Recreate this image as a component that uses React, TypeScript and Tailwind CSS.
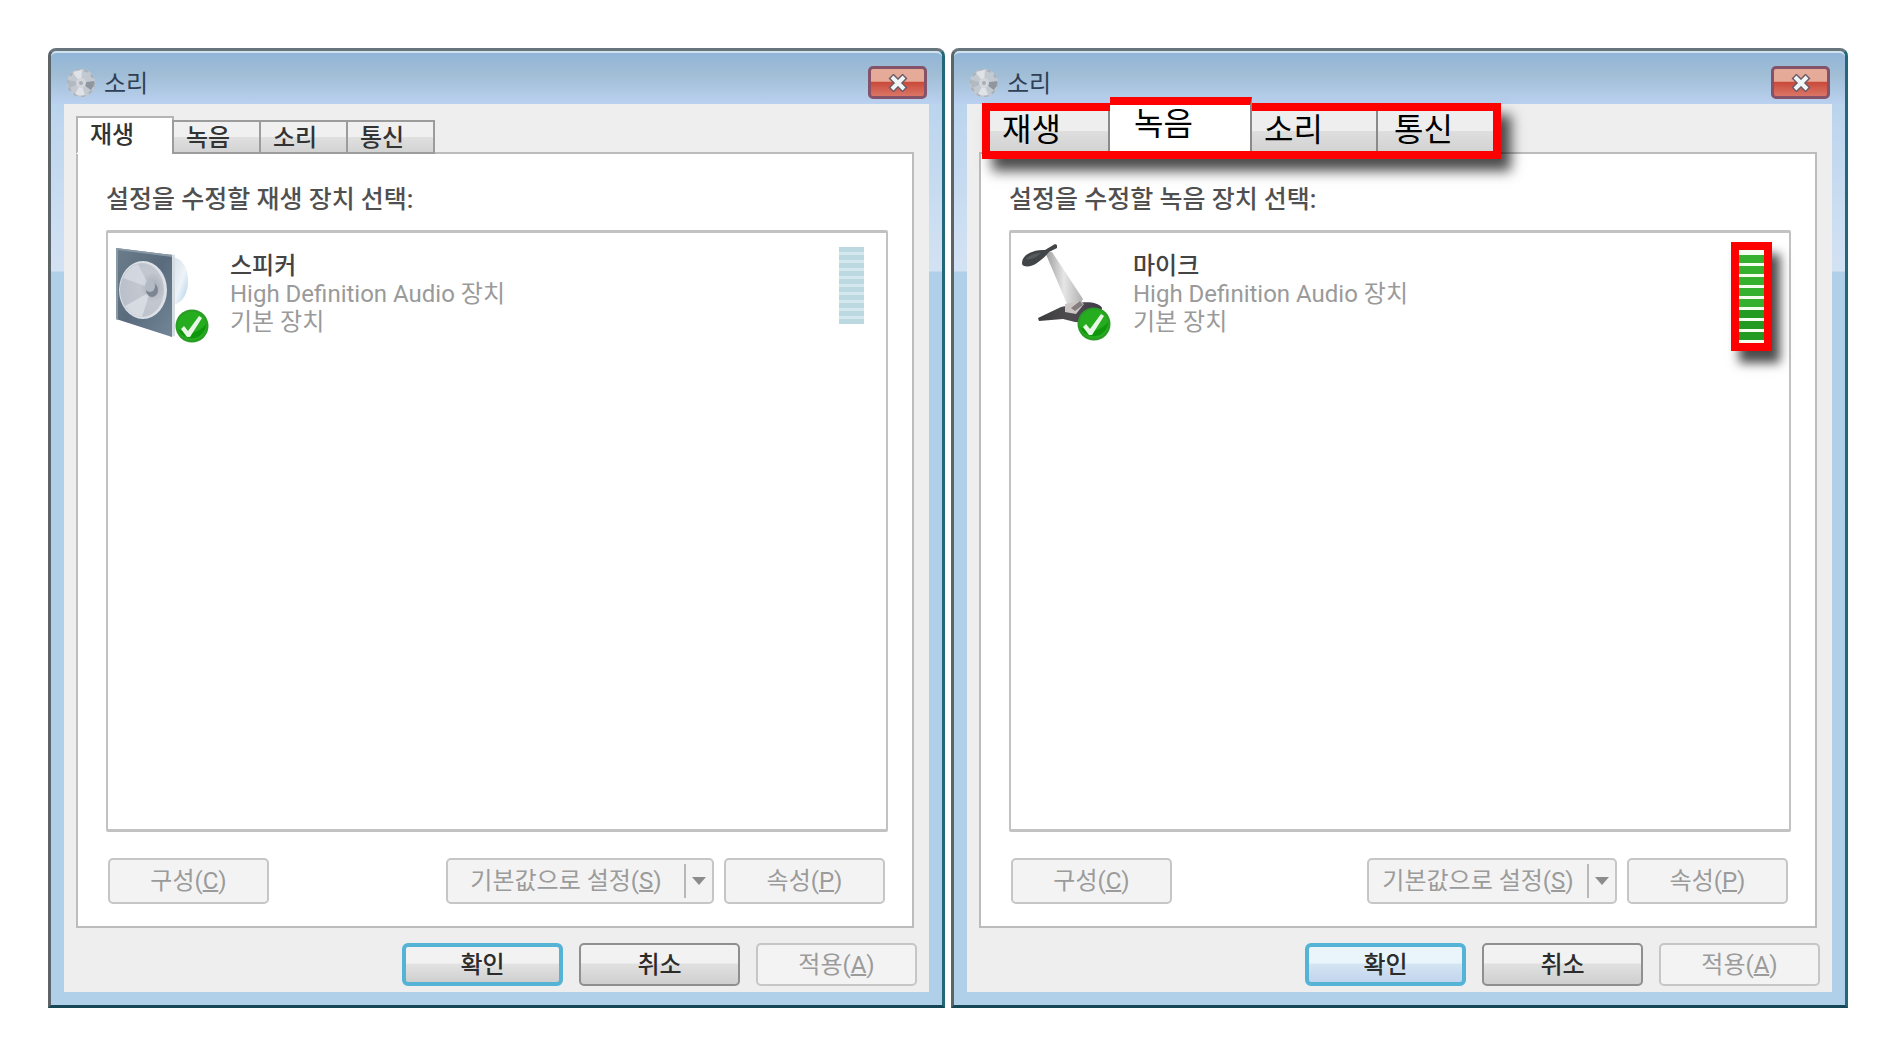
import { useState } from 'react';
import clsx from 'clsx';

type Kind = 'playback' | 'recording';

const TABS = ['재생', '녹음', '소리', '통신'];

function DefaultBadge({ cx, cy }: { cx: number; cy: number }) {
  return (
    <g transform={`translate(${cx} ${cy})`}>
      <circle r="16.5" fill="#2a9c25" />
      <circle r="14.5" fill="#25ac1f" />
      <path d="M-14 3a14.5 14.5 0 0 0 28-5C6 8-4 9-14 3z" fill="#0f970c" />
      <path d="M-11 3l3-3 4 5L7-10l3 2L-2 11h-3z" fill="#e9f8e6" />
    </g>
  );
}

function SpeakerIcon() {
  return (
    <svg className="size-[104px] shrink-0" viewBox="0 0 104 104" aria-hidden="true">
      <defs>
        <linearGradient id="spk-face" x1="0" y1="0" x2="1" y2="1">
          <stop offset="0" stopColor="#6c7d8b" />
          <stop offset="0.5" stopColor="#596b7c" />
          <stop offset="1" stopColor="#738799" />
        </linearGradient>
        <radialGradient id="spk-cone" cx="0.75" cy="0.45" r="0.8">
          <stop offset="0" stopColor="#a4a9b3" />
          <stop offset="0.35" stopColor="#c3c7d0" />
          <stop offset="1" stopColor="#b9bfc9" />
        </radialGradient>
        <linearGradient id="spk-side" x1="0" y1="0" x2="1" y2="1">
          <stop offset="0" stopColor="#d5e0e7" />
          <stop offset="0.55" stopColor="#edf3f8" />
          <stop offset="1" stopColor="#a9cfea" />
        </linearGradient>
      </defs>
      <path d="M60 15c10 1 16 10 16 24 0 12-5 22-15 24z" fill="url(#spk-side)" />
      <path d="M58 12l5 1v81l-5 1z" fill="#d5dde3" />
      <path d="M4 6l56 7v82L4 77z" fill="url(#spk-face)" />
      <path d="M4 6l56 7v2L6 8v70l-2-1z" fill="#8999a6" />
      <ellipse cx="31" cy="48" rx="24" ry="29" fill="#dce1e8" />
      <ellipse cx="30" cy="48" rx="22" ry="27" fill="url(#spk-cone)" />
      <path d="M38 46L11 36a22 27 0 0 1 15-14z" fill="#e0e3e9" opacity="0.6" />
      <path d="M38 50L13 64a22 27 0 0 0 17 11z" fill="#e6e9ee" opacity="0.6" />
      <ellipse cx="40" cy="48" rx="6" ry="7" fill="#7c8591" />
      <ellipse cx="38" cy="44" rx="5" ry="6" fill="#b4bac4" />
      <DefaultBadge cx={80} cy={84} />
    </svg>
  );
}

function MicrophoneIcon() {
  return (
    <svg className="size-[104px] shrink-0" viewBox="0 0 104 104" aria-hidden="true">
      <defs>
        <linearGradient id="mic-arm" x1="0" y1="0" x2="1" y2="0">
          <stop offset="0" stopColor="#9a9a9a" />
          <stop offset="0.5" stopColor="#e6e6e6" />
          <stop offset="1" stopColor="#b0b0b0" />
        </linearGradient>
        <linearGradient id="mic-base" x1="0" y1="0" x2="1" y2="0">
          <stop offset="0" stopColor="#3b3b3d" />
          <stop offset="0.5" stopColor="#4e4c50" />
          <stop offset="1" stopColor="#42384a" />
        </linearGradient>
      </defs>
      <path d="M23 76l23-11 14-3c10-3 24-2 27 4l-3 16-24-2-12-3-24 2z" fill="url(#mic-base)" />
      <path d="M30 10h7l31 47-4 8-12-3z" fill="url(#mic-arm)" />
      <path d="M50 62l14-3 5 3-8 10-11-2z" fill="#cbc5c3" />
      <path d="M56 66l9-7 3 4-8 6z" fill="#857d7f" />
      <path d="M7 21c0-5 4-9 10-11 5-2 9-2 13-2l10-6 2 1v3l-8 4c-4 5-8 8-12 11-4 3-9 4-13 3-2-1-2-2-2-3z" fill="#424547" />
      <path d="M11 17c4-4 9-6 15-6-4 4-9 7-15 6z" fill="#595c5e" />
      <DefaultBadge cx={79} cy={82} />
    </svg>
  );
}

function TitleIcon() {
  return (
    <svg className="size-[30px]" viewBox="0 0 30 30" aria-hidden="true">
      <circle cx="15" cy="15" r="14" fill="#c3c9d0" />
      <circle cx="15" cy="15" r="13" fill="none" stroke="#a9afb7" strokeWidth="2" strokeDasharray="4 4" />
      <path d="M15 15L7 5a13 13 0 0 1 9-3zM15 15l4 12a13 13 0 0 1-10-1z" fill="#dfe2e6" />
      <path d="M15 15l13-2a13 13 0 0 1-3 9z" fill="#8f96a0" />
      <path d="M15 15L2 12a13 13 0 0 0 1 8z" fill="#b3b9c1" />
      <circle cx="15" cy="15" r="5" fill="#d3d6da" />
      <circle cx="15" cy="15" r="2" fill="#a8aeb6" />
    </svg>
  );
}

function IdleMeter() {
  return (
    <div className="mt-[5px] mr-[22px] flex w-[25px] flex-col gap-[3px] self-start bg-[#d5e8ee]">
      {Array.from({ length: 10 }, (_, i) => (
        <div key={i} className="h-[5px] bg-[#bcd8e1]" />
      ))}
    </div>
  );
}

function ActiveMeter() {
  return (
    <div className="mr-[17px] flex w-[41px] flex-col gap-[3px] self-start border-8 border-[#fe0000] bg-[#f4fff0] pt-[5px] pb-[3px] shadow-[8px_12px_10px_0px_rgba(0,0,0,0.7)]">
      {Array.from({ length: 8 }, (_, i) => (
        <div key={i} className={clsx('h-2', i < 5 ? 'bg-[#35b02f]' : 'bg-[#239a22]')} />
      ))}
    </div>
  );
}

interface TabsProps {
  active: number;
  onChange: (index: number) => void;
}

function TabStrip({ active, onChange }: TabsProps) {
  return (
    <div role="tablist" className="relative z-10 -mb-[2px] flex h-[38px] items-end">
      {TABS.map((tab, i) => (
        <button
          key={tab}
          role="tab"
          aria-selected={i === active}
          onClick={() => onChange(i)}
          className={clsx(
            'border-2 text-left text-2xl leading-7 font-medium',
            i === active
              ? 'h-[38px] w-[98px] border-[#b4b4b4] border-b-white bg-white pl-3'
              : '-ml-[2px] h-[34px] w-[89px] border-[#9c9c9c] bg-linear-to-b from-[#f0f0f0] from-50% via-[#e0e0e0] via-50% to-[#d3d3d3] pt-[2px] pl-3',
          )}
        >
          {tab}
        </button>
      ))}
    </div>
  );
}

// Enlarged tab strip with the red marker, laid over the regular one
function MarkedTabStrip({ active, onChange }: TabsProps) {
  return (
    <div className="relative z-10 -mb-[2px] h-[38px]">
      <div
        role="tablist"
        className="absolute -top-[13px] left-[3px] grid h-[56px] w-[519px] grid-cols-[120px_142px_126px_1fr] border-8 border-[#fe0000] bg-[#e4e4e4] shadow-[10px_12px_12px_0px_rgba(0,0,0,0.7)]"
      >
        {TABS.map((tab, i) => (
          <button
            key={tab}
            role="tab"
            aria-selected={i === active}
            onClick={() => onChange(i)}
            className={clsx(
              'text-left text-[32px] leading-8 text-black',
              i === active
                ? '-mt-[14px] border-t-8 border-r-2 border-t-[#fe0000] border-r-[#8a8a8a] bg-white pb-2 pl-6'
                : 'border-r-2 border-[#8a8a8a] bg-linear-to-b from-[#eeeeee] from-50% via-[#dedede] via-50% to-[#d3d3d3] pb-[2px] pl-3 last:border-r-0 last:pl-4',
            )}
          >
            {tab}
          </button>
        ))}
      </div>
    </div>
  );
}

const disabledButton = 'rounded-[5px] border-2 border-[#c6c6c6] bg-[#f3f3f3] text-[#9b9b9b]';

interface SoundDialogProps {
  kind: Kind;
  prompt: string;
  device: string;
}

function SoundDialog({ kind, prompt, device }: SoundDialogProps) {
  const recording = kind === 'recording';
  const [active, setActive] = useState(recording ? 1 : 0);
  const Strip = recording ? MarkedTabStrip : TabStrip;

  return (
    <section className="flex flex-col rounded-t-lg border-3 border-t-[#68757d] border-r-[#236878] border-b-[#164756] border-l-[#5c6468] bg-linear-to-b from-[#b3d0ec] via-[#d3e2f3] via-[220px] to-[#b0d0ea] to-[221px] px-[13px] pb-[13px]">
      <header className="-mx-[13px] flex h-[53px] items-center gap-2 rounded-t-md border-t-2 border-[#cfe3ec] bg-linear-to-b from-[#91b5d8] via-[#a0bdd5] via-40% to-[#bad1ef] px-[15px] pt-2">
        <TitleIcon />
        <h1 className="flex-1 pt-[2px] text-2xl leading-8 text-[#2f3f55]">소리</h1>
        <button
          aria-label="닫기"
          className="flex h-[33px] w-[59px] items-center justify-center rounded-[5px] border-3 border-[#84536a] bg-linear-to-b from-[#e6ab98] from-45% via-[#c94a3b] via-50% to-[#db7566]"
        >
          <svg className="h-[18px] w-[22px]" viewBox="0 0 22 18" aria-hidden="true">
            <path d="M4 2l14 14M18 2L4 16" stroke="#6d5a68" strokeWidth="7" />
            <path d="M5 3l12 12M17 3L5 15" stroke="#f2f5f5" strokeWidth="4" />
          </svg>
        </button>
      </header>

      <div className="flex flex-1 flex-col bg-[#eeeeee] pt-3 pr-3 pb-[6px] pl-3">
        <div className="mr-[3px] flex flex-1 flex-col">
          <Strip active={active} onChange={setActive} />
          <div className="flex flex-1 flex-col border-2 border-[#bcbcbc] bg-white pt-[30px] pr-6 pb-[22px] pl-7">
            <p className="text-[25px] leading-8 font-medium text-[#505050]">{prompt}</p>
            <ul className="mt-[14px] flex-1 rounded-xs border-x-2 border-y-3 border-[#c2c2c2] bg-white">
              <li className="flex gap-[14px] pt-[9px] pl-1">
                {recording ? <MicrophoneIcon /> : <SpeakerIcon />}
                <div className="flex-1 pt-[10px] text-2xl leading-7 text-[#9a9a9a]">
                  <p className="font-medium text-[#444444]">{device}</p>
                  <p>High Definition Audio 장치</p>
                  <p>기본 장치</p>
                </div>
                {recording ? <ActiveMeter /> : <IdleMeter />}
              </li>
            </ul>
            <div className="mt-[26px] flex h-[46px] gap-[10px] pr-[3px] pl-[2px] text-2xl">
              <button disabled className={clsx(disabledButton, 'mr-auto w-[161px]')}>
                구성(<u className="underline-offset-1">C</u>)
              </button>
              <button
                disabled
                className={clsx(disabledButton, 'flex items-center', recording ? 'w-[250px]' : 'w-[268px]')}
              >
                <span className="flex-1 text-center">
                  기본값으로 설정(<u className="underline-offset-1">S</u>)
                </span>
                <span className="flex h-[34px] w-[28px] items-center justify-center border-l-2 border-[#b8b8b8]">
                  <svg className="h-2 w-[14px]" viewBox="0 0 14 8" aria-hidden="true">
                    <path d="M0 0h14L7 8z" fill="#8c8c8c" />
                  </svg>
                </span>
              </button>
              <button disabled className={clsx(disabledButton, 'w-[161px]')}>
                속성(<u className="underline-offset-1">P</u>)
              </button>
            </div>
          </div>
        </div>

        <footer className="mt-[15px] flex h-[43px] justify-end gap-4 text-2xl font-medium text-[#2c2c2c]">
          <button
            className={clsx(
              'w-[161px] rounded-[6px] border-4 border-[#55b4d6] bg-linear-to-b',
              recording
                ? 'from-[#e9f5fb] from-45% via-[#d3e4f2] via-50% to-[#c3d4ee]'
                : 'from-[#f2f2f2] from-45% via-[#e2e2e2] via-50% to-[#cfcfcf]',
            )}
          >
            확인
          </button>
          <button className="w-[161px] rounded-[5px] border-2 border-[#8f8f8f] bg-linear-to-b from-[#f2f2f2] from-45% via-[#e0e0e0] via-50% to-[#cfcfcf]">
            취소
          </button>
          <button disabled className={clsx(disabledButton, 'w-[161px] font-normal')}>
            적용(<u className="underline-offset-1">A</u>)
          </button>
        </footer>
      </div>
    </section>
  );
}

export default function App() {
  return (
    <main className="grid min-h-screen grid-cols-2 gap-[6px] bg-white p-12 font-[Roboto,'Noto_Sans_CJK_KR',sans-serif] text-[#333333]">
      <SoundDialog kind="playback" prompt="설정을 수정할 재생 장치 선택:" device="스피커" />
      <SoundDialog kind="recording" prompt="설정을 수정할 녹음 장치 선택:" device="마이크" />
    </main>
  );
}
